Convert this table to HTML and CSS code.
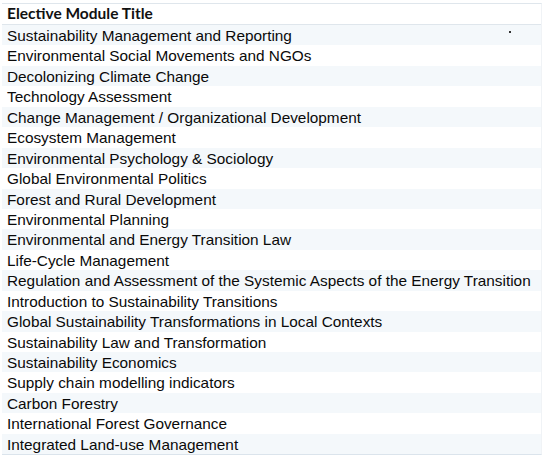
FILE: index.html
```html
<!DOCTYPE html>
<html>
<head>
<meta charset="utf-8">
<link rel="stylesheet" href="styles.css">
</head>
<body>
<div class="table">
  <div class="head">Elective Module Title</div>
  <div class="row alt">Sustainability Management and Reporting<span class="dot"></span></div>
  <div class="row">Environmental Social Movements and NGOs</div>
  <div class="row alt">Decolonizing Climate Change</div>
  <div class="row">Technology Assessment</div>
  <div class="row alt">Change Management / Organizational Development</div>
  <div class="row">Ecosystem Management</div>
  <div class="row alt">Environmental Psychology &amp; Sociology</div>
  <div class="row">Global Environmental Politics</div>
  <div class="row alt">Forest and Rural Development</div>
  <div class="row">Environmental Planning</div>
  <div class="row alt">Environmental and Energy Transition Law</div>
  <div class="row">Life-Cycle Management</div>
  <div class="row alt">Regulation and Assessment of the Systemic Aspects of the Energy Transition</div>
  <div class="row">Introduction to Sustainability Transitions</div>
  <div class="row alt">Global Sustainability Transformations in Local Contexts</div>
  <div class="row">Sustainability Law and Transformation</div>
  <div class="row alt">Sustainability Economics</div>
  <div class="row">Supply chain modelling indicators</div>
  <div class="row alt">Carbon Forestry</div>
  <div class="row">International Forest Governance</div>
  <div class="row alt">Integrated Land-use Management</div>
</div>
</body>
</html>
```
FILE: styles.css
```css
html, body {
  margin: 0;
  padding: 0;
  background: #ffffff;
}
body {
  padding: 3px 6px 0 2px;
}
.table {
  width: 539px;
  border-top: 1px solid #dfe6ec;
  border-bottom: 1px solid #dbe4ec;
  border-right: 1px solid #f0f3f6;
}
.head {
  height: 20px;
  padding-left: 5px;
  font-family: "Lato", "Liberation Sans", sans-serif;
  font-weight: 700;
  font-size: 15.5px;
  line-height: 19px;
  color: #111;
  border-bottom: 1px solid #dfe6ec;
}
.row {
  position: relative;
  height: 20.45px;
  padding-left: 5px;
  font-family: "Liberation Sans", Arial, sans-serif;
  font-size: 15.35px;
  line-height: 22px;
  overflow: hidden;
  color: #0a0a0a;
  white-space: nowrap;
}
.alt {
  background: #f4f8fb;
}
.dot {
  position: absolute;
  left: 507px;
  top: 6px;
  width: 2px;
  height: 2px;
  background: #333;
}
```
